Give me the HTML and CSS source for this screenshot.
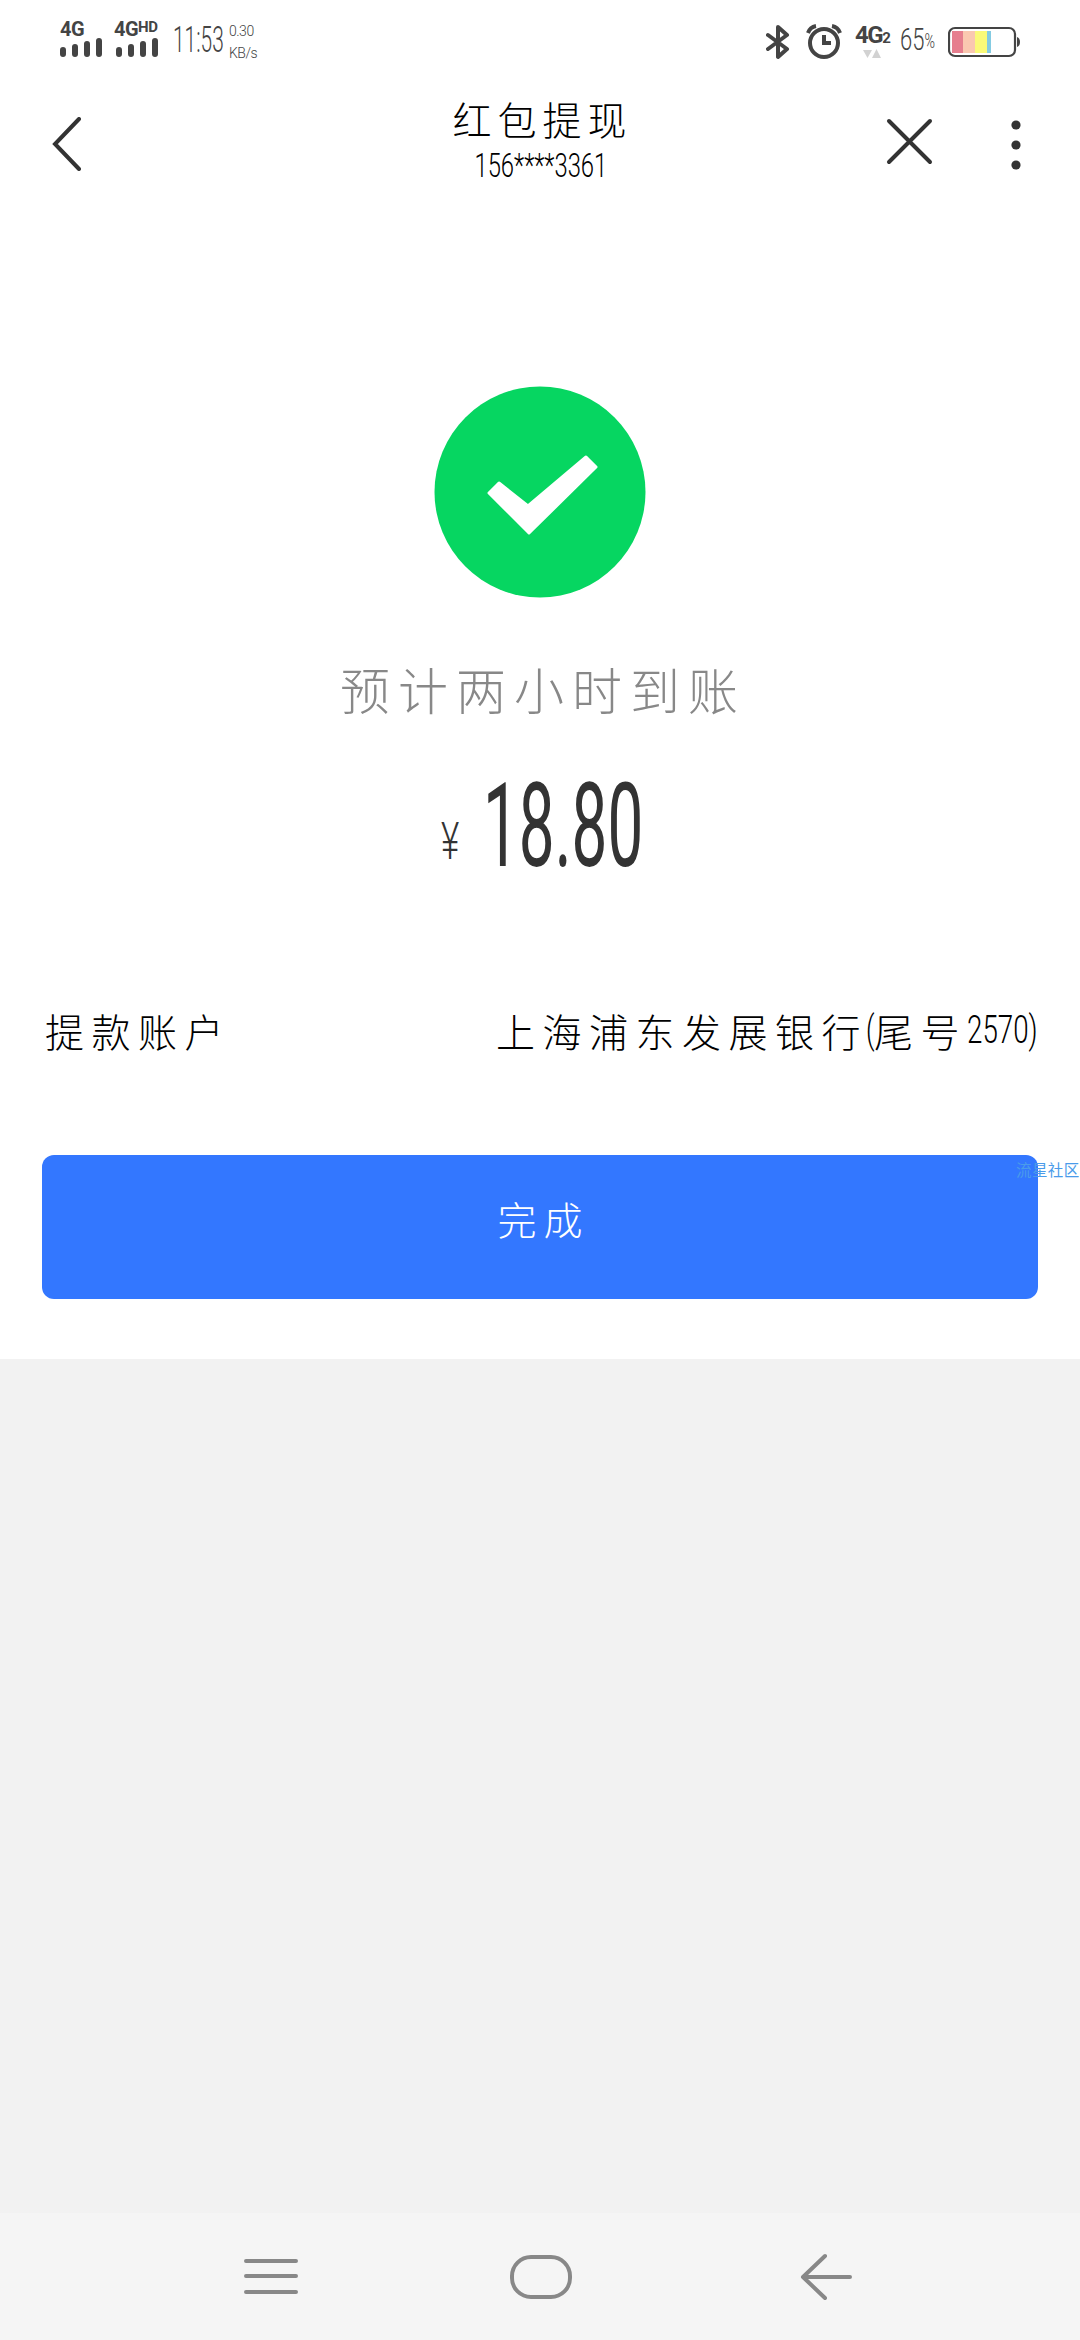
FILE: index.html
```html
<!DOCTYPE html>
<html lang="zh-CN">
<head>
<meta charset="utf-8">
<title>红包提现</title>
<link rel="stylesheet" href="styles.css">
</head>
<body>
<div class="screen">
  <header class="status">
    <div class="signal">
      <span class="net">4G</span>
      <svg width="44" height="21" viewBox="0 0 44 21"><path d="M3 12v4M15 9v7M27 6v10M39 3v13"/></svg>
    </div>
    <div class="signal second">
      <span class="net">4G<small>HD</small></span>
      <svg width="44" height="21" viewBox="0 0 44 21"><path d="M3 12v4M15 9v7M27 6v10M39 3v13"/></svg>
    </div>
    <div class="time"><span class="squeeze">11:53</span></div>
    <div class="speed"><span>0.30</span><span>KB/s</span></div>
    <div class="spacer"></div>
    <svg class="bluetooth" width="24" height="36" viewBox="0 0 24 36"><path d="M2 11l19 14-9 8V3l9 8L2 25"/></svg>
    <svg class="alarm" width="36" height="36" viewBox="0 0 36 36"><circle cx="18" cy="19" r="14"/><path d="M18 11v8h7"/><path class="bells" d="M2 9Q4 3 10 2M34 9Q32 3 26 2"/></svg>
    <div class="data">
      <span class="net">4G<small>2</small></span>
      <svg width="18" height="10" viewBox="0 0 18 10"><path d="M0 1h9L4.500 9zM9 9h9L13.500 0z"/></svg>
    </div>
    <div class="percent"><span class="squeeze">65<small>%</small></span></div>
    <svg class="battery" width="73" height="32" viewBox="0 0 73 32">
      <rect x="1" y="2" width="66" height="28" rx="6" fill="none" stroke="#444" stroke-width="2.200"/>
      <path d="M69 11q3 1 3 5t-3 5z" fill="#444"/>
      <path fill="#e67e8e" d="M4 5h11v22H4z"/><path fill="#fac8b0" d="M15 5h12v22H15z"/>
      <path fill="#fafa78" d="M27 5h12v22H27z"/><path fill="#84cbe2" d="M39 5h4v22h-4z"/>
    </svg>
  </header>

  <nav class="titlebar">
    <svg class="back" width="30" height="54" viewBox="0 0 30 54"><path d="M27 2L3 27l24 25"/></svg>
    <div class="titles">
      <h1>红包提现</h1>
      <div class="phone"><span class="squeeze">156****3361</span></div>
    </div>
    <div class="actions">
      <svg width="48" height="48" viewBox="0 0 48 48"><path d="M3 3l41 41M44 3L3 44"/></svg>
      <svg class="more" width="10" height="50" viewBox="0 0 10 50"><circle cx="5" cy="5" r="4.600"/><circle cx="5" cy="25" r="4.600"/><circle cx="5" cy="45" r="4.600"/></svg>
    </div>
  </nav>

  <main class="result">
    <svg class="success" width="212" height="212" viewBox="0 0 212 212"><circle cx="106" cy="106" r="105.500" fill="#06d661"/><path d="M55 107L65 97l29 23 58-49 10 10-67 66z" fill="#fff" stroke="#fff" stroke-width="3" stroke-linejoin="round"/></svg>
    <p class="estimate">预计两小时到账</p>
    <div class="amount"><span class="yen"><span class="squeeze">¥</span></span><span class="value"><span class="squeeze">18.80</span></span></div>
    <div class="account">
      <span>提款账户</span>
      <span class="bank">上海浦东发展银行<i class="paren"><b class="squeeze">(</b></i>尾号<i class="digits"><b class="squeeze">2570)</b></i></span>
    </div>
    <button class="done">完成</button>
    <span class="watermark">流星社区</span>
  </main>

  <div class="blank"></div>

  <footer class="navbar">
    <svg width="54" height="46" viewBox="0 0 54 46"><path d="M2 7h50M2 22h50M2 38h50"/></svg>
    <svg class="home" width="64" height="46" viewBox="0 0 64 46"><rect x="3" y="3" width="58" height="40" rx="19"/></svg>
    <svg width="54" height="48" viewBox="0 0 54 48"><path d="M25 3L3 24l22 21M3 24h47"/></svg>
  </footer>
</div>
</body>
</html>
```
FILE: styles.css
```css
* { box-sizing: border-box; }
body { margin: 0; background: #f2f2f2; font-family: "Noto Sans CJK SC", sans-serif; font-weight: 300; }
svg { display: block; flex: none; }
i, b { font-style: normal; font-weight: inherit; }
.screen { width: 1080px; height: 2340px; display: flex; flex-direction: column; overflow: hidden; color: #000; }
.squeeze { display: inline-block; transform-origin: left center; white-space: nowrap; }

.status { height: 80px; flex: none; background: #fff; display: flex; align-items: flex-start; padding: 20px 59px 0 60px; color: #444; }
.signal { width: 56px; }
.second { width: 57px; }
.net { display: block; font: bold 20px/19px Roboto, sans-serif; letter-spacing: -0.5px; white-space: nowrap; }
.net small { font-size: 15px; vertical-align: 4px; line-height: 0; }
.signal svg { margin-top: -1px; }
.second .net { margin-left: -2px; }
.signal svg path { stroke: #444; stroke-width: 6; stroke-linecap: round; fill: none; }
.time { width: 56px; font: 300 36px/40px Roboto, sans-serif; }
.time .squeeze { transform: scaleX(.58); }
.speed { font: 300 14px/22px Roboto, sans-serif; display: flex; flex-direction: column; letter-spacing: -0.5px; }
.spacer { flex: 1; }
.bluetooth { margin: 4px 16px 0 0; }
.bluetooth path { fill: none; stroke: #444; stroke-width: 4; stroke-linejoin: round; stroke-linecap: round; }
.alarm { margin: 4px 13px 0 0; fill: none; stroke: #444; stroke-width: 4; }
.data { width: 45px; padding-top: 5px; }
.data .net { font-size: 24px; line-height: 21px; letter-spacing: -1.5px; }
.data .net small { font-size: 15px; vertical-align: 0; }
.data svg { margin: 3px 0 0 8px; fill: #d2d2d2; }
.percent { width: 48px; font: 300 31px/38px Roboto, sans-serif; padding-top: 1px; }
.percent small { font-size: 20px; vertical-align: 2px; }
.percent .squeeze { transform: scaleX(.71); }
.battery { margin: 6px 0 0 0; }

.titlebar { height: 120px; flex: none; background: #fff; display: grid; grid-template-columns: 1fr 300px 1fr; padding: 0 60px 0 52px; }
.back { margin-top: 37px; fill: none; stroke: #333; stroke-width: 4; stroke-linecap: round; }
.titles { text-align: center; padding-left: 9px; }
h1 { margin: 14px 0 0; font-size: 39px; line-height: 48px; font-weight: 300; letter-spacing: 6px; text-indent: 4px; }
.phone { font: 300 34px/40px Roboto, sans-serif; margin-top: 3px; }
.phone .squeeze { transform-origin: center; transform: scaleX(.7); }
.actions { display: flex; justify-content: flex-end; gap: 77px; padding-top: 38px; margin-right: -1px; }
.actions svg { fill: none; stroke: #333; stroke-width: 4; stroke-linecap: round; }
.actions .more { fill: #333; stroke: none; margin-top: 2px; }

.result { position: relative; flex: none; height: 1159px; background: #fff; padding: 186px 42px 0; display: flex; flex-direction: column; }
.success { align-self: center; }
.estimate { margin: 52px 0 0; font-size: 50px; line-height: 76px; letter-spacing: 8px; text-indent: 6px; text-align: center; color: #888; }
.amount { height: 130px; margin-top: 35px; padding-left: 399px; display: flex; color: #333; }
.yen { width: 42px; font: 300 52px/60px Roboto, sans-serif; padding-top: 51px; }
.yen .squeeze { transform: scaleX(.68); }
.value { font: 400 116px/130px Roboto, sans-serif; }
.value .squeeze { transform: scaleX(.55); }
.account { margin: 109px 0 0; height: 60px; display: flex; justify-content: space-between; padding: 0 2px 0 3px; font-size: 39px; line-height: 60px; letter-spacing: 7.500px; white-space: nowrap; }
.bank { display: flex; }
.paren, .digits { display: block; font: 300 38px/60px Roboto, sans-serif; letter-spacing: 0; }
.paren { width: 8px; margin-left: -2px; }
.paren .squeeze { transform: scaleX(.7); }
.digits { width: 69px; }
.digits .squeeze { transform: scaleX(.73); }
.done { margin: 95px 0 0; height: 144px; flex: none; border: 0; border-radius: 12px; background: #3377ff; color: #fff; font: 300 39px/60px "Noto Sans CJK SC", sans-serif; letter-spacing: 7px; padding: 0 0 18px 7px; }
.watermark { position: absolute; left: 1016px; top: 956px; font-size: 15.500px; line-height: 26px; letter-spacing: 0.4px; color: #4a9bea; white-space: nowrap; font-weight: 400; }

.blank { flex: 1; background: #f2f2f2; }
.navbar { height: 127px; flex: none; background: #f5f5f5; display: flex; align-items: center; justify-content: space-between; padding: 0 226px 0 244px; }
.navbar svg { fill: none; stroke: #888; stroke-width: 4; stroke-linecap: round; stroke-linejoin: round; }
.navbar .home { margin-right: 17px; }
```
